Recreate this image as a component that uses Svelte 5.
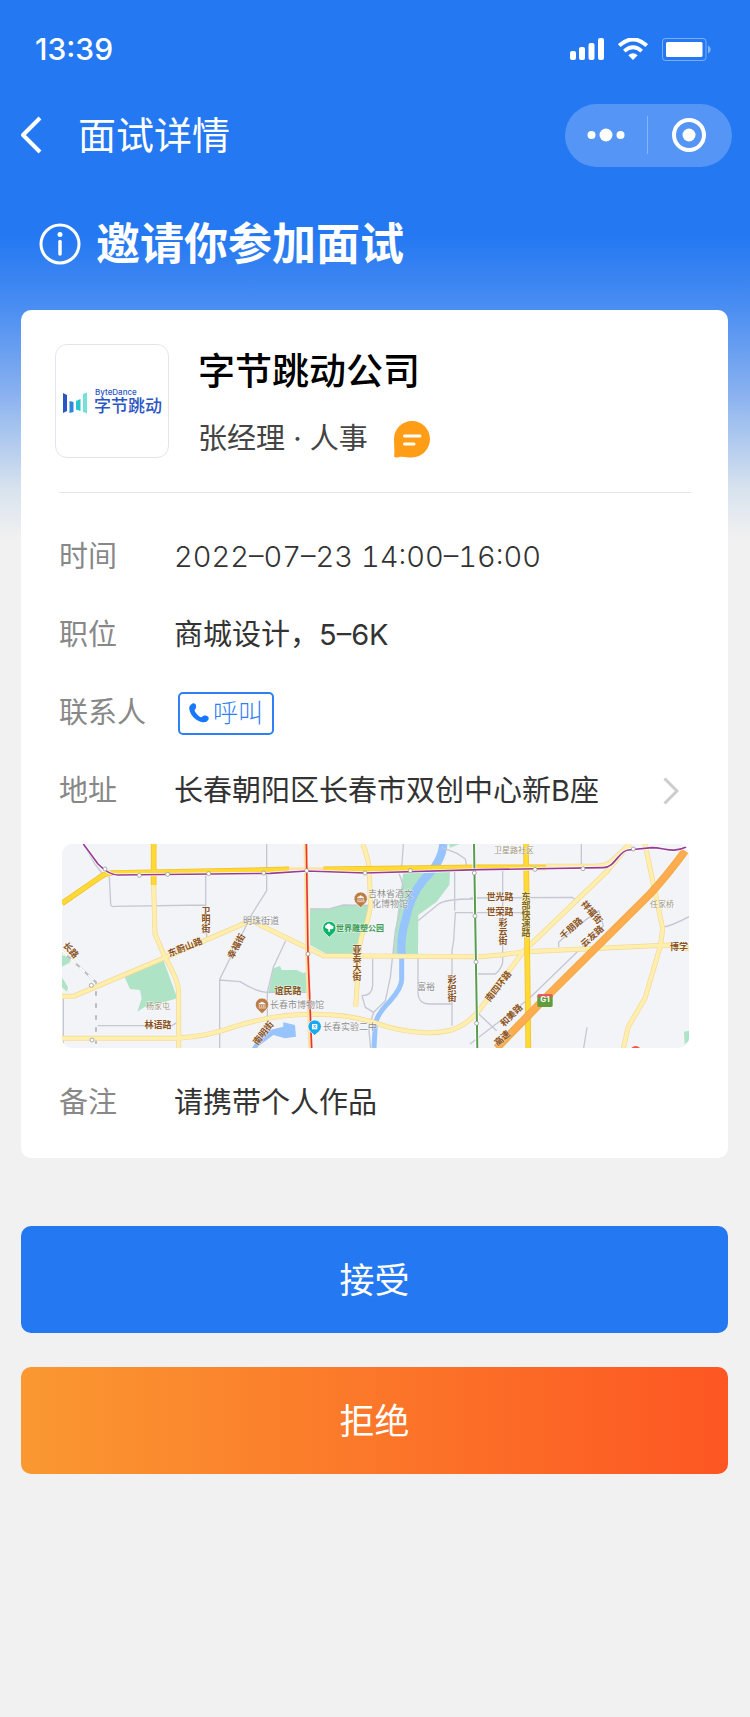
<script>
  const interview = {
    company: "字节跳动公司",
    contact: "张经理 · 人事",
    time: "2022–07–23 14:00–16:00",
    job: "商城设计，5–6K",
    address: "长春朝阳区长春市双创中心新B座",
    remark: "请携带个人作品",
  };

  let answer = $state("");

  // street names: x, y is the middle of the label
  const streets = [
    { text: "东蔚山路", x: 123, y: 103, angle: -22 },
    { text: "林语路", x: 96, y: 180, angle: 0 },
    { text: "谊民路", x: 226, y: 146, angle: 0 },
    { text: "世光路", x: 438, y: 52, angle: 0 },
    { text: "世荣路", x: 438, y: 67, angle: 0 },
    { text: "祥福街", x: 530, y: 68, angle: 50 },
    { text: "千朋路", x: 509, y: 84, angle: -42 },
    { text: "云友路", x: 530, y: 92, angle: -42 },
    { text: "南四环路", x: 436, y: 142, angle: -52 },
    { text: "和美路", x: 449, y: 171, angle: -45 },
    { text: "博学", x: 617, y: 102, angle: 0 },
    { text: "长路", x: 9, y: 106, angle: 48 },
    { text: "高速", x: 440, y: 194, angle: -42 },
    { text: "南明街", x: 201, y: 189, angle: -52 },
    { text: "幸福街", x: 174, y: 102, angle: -62 },
  ];

  const columns = [
    { text: "卫明街", x: 144, y: 67 },
    { text: "亚泰大街", x: 295, y: 106 },
    { text: "彩织街", x: 390, y: 136 },
    { text: "彩云街", x: 441, y: 79 },
    { text: "东部快速路", x: 464, y: 53, dark: true },
  ];

  const places = [
    { text: "明珠街道", x: 181, y: 76 },
    { text: "吉林省酒文", x: 306, y: 49 },
    { text: "化博物馆", x: 310, y: 59 },
    { text: "长春市博物馆", x: 208, y: 160 },
    { text: "长春实验二中", x: 261, y: 182 },
    { text: "富裕", x: 355, y: 142 },
  ];

  const villages = [
    { text: "杨家屯", x: 84, y: 162 },
    { text: "任家桥", x: 588, y: 60 },
    { text: "卫星路社区", x: 432, y: 6 },
  ];

  const stations = [
    [129, 75], [232, 94], [317, 91], [440, 89], [605, 87], [734, 80], [909, 87],
    [1045, 80], [1419, 76], [1563, 74], [1714, 15], [88, 424], [90, 588],
    [738, 330], [1237, 87], [1239, 216], [1242, 354], [1244, 538],
  ];
</script>

<div class="page">
  <div class="status-bar">
    <span class="clock">13:39</span>
    <div class="status-icons">
      <svg width="34" height="22" viewBox="0 0 34 22" fill="#fff">
        <rect x="0" y="13" width="6" height="9" rx="2" />
        <rect x="9" y="9" width="6" height="13" rx="2" />
        <rect x="18.500" y="5" width="6" height="17" rx="2" />
        <rect x="28" y="0" width="6" height="22" rx="2" />
      </svg>
      <svg width="30" height="22" viewBox="0 0 30 22" fill="none" stroke="#fff">
        <path d="M1.200 7.600Q15-4.800 28.800 7.600" stroke-width="4" />
        <path d="M6.300 13.200Q15 5.500 23.700 13.200" stroke-width="3.800" />
        <path d="M10.300 17.200Q15 13.500 19.700 17.200L15 22Z" fill="#fff" stroke="none" />
      </svg>
      <svg width="49" height="23" viewBox="0 0 49 23">
        <rect x="0.500" y="0.500" width="43.500" height="22" rx="3" fill="none" stroke="#fff" stroke-opacity=".4" />
        <rect x="4" y="4" width="36.500" height="15" rx="1.500" fill="#fff" />
        <path d="M46 7.500C49.500 9 49.500 14 46 15.500Z" fill="#fff" fill-opacity=".45" />
      </svg>
    </div>
  </div>

  <header class="nav">
    <button class="back" aria-label="返回">
      <svg width="22" height="38" viewBox="0 0 22 38" fill="none" stroke="#fff" stroke-width="4">
        <path d="M20 2L3 19L20 36" stroke-linejoin="round" />
      </svg>
    </button>
    <h1>面试详情</h1>
    <div class="capsule">
      <button aria-label="更多">
        <svg width="38" height="14" viewBox="0 0 38 14" fill="#fff">
          <circle cx="4.500" cy="7" r="4" />
          <circle cx="19" cy="7" r="6.500" />
          <circle cx="33.500" cy="7" r="4" />
        </svg>
      </button>
      <span class="capsule-line"></span>
      <button aria-label="关闭">
        <svg width="36" height="36" viewBox="0 0 36 36">
          <circle cx="18" cy="18" r="15" fill="none" stroke="#fff" stroke-width="4" />
          <circle cx="18" cy="18" r="6.500" fill="#fff" />
        </svg>
      </button>
    </div>
  </header>

  <div class="invite">
    <svg width="42" height="42" viewBox="0 0 42 42" fill="none" stroke="#fff" stroke-width="3">
      <circle cx="21" cy="21" r="19" />
      <path d="M21 18.500V31" stroke-width="3.500" stroke-linecap="round" />
      <circle cx="21" cy="11.500" r="2.500" fill="#fff" stroke="none" />
    </svg>
    <h2>邀请你参加面试</h2>
  </div>

  <main>
    <section class="card">
      <div class="company">
        <svg class="logo" viewBox="0 0 112 112">
          <path d="M7 48L11 50V66L7 68Z" fill="#2b55c4" />
          <path d="M13.500 56L17.500 57V67L13.500 68Z" fill="#2d86dc" />
          <path d="M20 56L24.500 54V66L20 64.500Z" fill="#26c6cd" />
          <path d="M27 49L31 47.500V68.500L27 67Z" fill="#74e0d6" />
          <text x="39" y="50" class="logo-en">ByteDance</text>
          <text x="38" y="67" class="logo-zh">字节跳动</text>
        </svg>
        <div class="company-text">
          <h3>{interview.company}</h3>
          <div class="contact">
            <span>{interview.contact}</span>
            <button class="chat" aria-label="聊天">
              <svg width="36" height="37" viewBox="0 0 36 37">
                <path d="M18 0C28 0 36 8 36 18C36 28 28 36.500 18 36.500C13 36.500 9 35 5 36C2 36.800 0 37 .2 34.500C.8 31 0 24 0 18C0 8 8 0 18 0Z" fill="#ff9e16" />
                <path d="M10.500 15H26M10.500 23H20" stroke="#fff" stroke-width="3" stroke-linecap="round" />
              </svg>
            </button>
          </div>
        </div>
      </div>

      <div class="details">
        <div class="row">
          <span class="label">时间</span>
          <span class="value time">{interview.time}</span>
        </div>
        <div class="row">
          <span class="label">职位</span>
          <span class="value">{interview.job}</span>
        </div>
        <div class="row">
          <span class="label">联系人</span>
          <button class="call">
            <svg width="20" height="20" viewBox="0 0 20 20" fill="#1677ff">
              <path d="M3.500.6C5.200-.3 6.800.8 7 2.500C7.200 4 7.200 5.300 6.200 6.200C5.300 7 5.500 7.600 6.100 8.700C7.400 11 9.200 12.700 11.300 13.900C12.200 14.400 12.800 14.200 13.500 13.400C14.500 12.200 16 12.300 17.500 12.800C19.500 13.500 20.300 15 19.300 16.700C18 19 15.500 19.700 12.500 18.900C6.500 17.300 1.700 12.500.4 6.700C-.2 4 .9 1.900 3.500.6Z" />
            </svg>
            呼叫
          </button>
        </div>
        <a class="row" href="#map">
          <span class="label">地址</span>
          <span class="value">{interview.address}</span>
          <svg class="arrow" width="16" height="28" viewBox="0 0 16 28" fill="none" stroke="#ccc" stroke-width="3">
            <path d="M1.500 1.500L14 14L1.500 26.500" />
          </svg>
        </a>
      </div>

      <svg id="map" class="map" viewBox="0 0 627 204">
        <rect width="627" height="204" fill="#f2f4f8" />
        <!-- roads are drawn on a grid three times finer than the labels -->
        <g transform="scale(.333333)" fill="none" stroke-linejoin="round">
          <g fill="#aee4c5">
            <path d="M744 195H804L844 183L924 185L916 223L894 273L884 330H794L744 303Z" />
            <path d="M1024 85L1164 83L1162 123L1124 173L1069 213L1068 330H994L1006 213Z" />
            <path d="M619 448L634 373L654 366L659 378H704L724 388L734 383L736 443Z" />
            <path d="M186 395L304 348L346 463L294 478L249 488L226 503L239 463L234 438L204 435Z" />
            <path d="M0 334L29 341L22 357L0 368ZM0 400L18 430L15 443L0 430Z" />
            <path d="M1160 0H1192L1165 11ZM1866 563L1881 560V590L1868 601Z" />
          </g>
          <path d="M570 612L594 573L614 560L664 548V535L699 543L702 578L669 583L634 573L594 603L585 612Z" fill="#98c4fd" />
          <g stroke="#98c4fd">
            <path d="M1144 0Q1140 55 1084 108Q1045 155 1030 230Q1015 280 1019 330" stroke-width="25" />
            <path d="M1019 310V405Q1020 430 985 470Q945 510 940 540L936 612" stroke-width="15" />
          </g>

          <g stroke="#c5c8d3" stroke-width="4">
            <path d="M64 0L100 62L122 90M142 98L146 180Q147 190 158 187L430 183M431 93V182L434 280M614 0V140L570 210L473 406V612M473 408L534 413Q590 448 624 445" />
            <path d="M4 463V612M107 545H330L345 535M744 195L804 194L844 183L924 184M671 290L634 370L616 445H738M616 445V560" />
            <path d="M1024 0L1020 60L1010 85L1024 125L1018 183L1000 260L985 400L970 470L935 505L920 550L926 612M932 345V425Q930 455 900 455L910 490L935 505" />
            <path d="M1139 10L1185 28L1210 45L1214 66M1234 206H1180L1175 290L1170 320V545M1068 230L1130 180Q1150 165 1234 165M1068 335V450Q1070 478 1100 480H1170M1178 83V200" />
            <path d="M1322 80V355Q1318 375 1300 390H1240M1224 162L1530 160L1550 175M1224 206H1385M1558 0V70M1490 310V295L1540 250L1610 200L1624 245L1560 310L1400 465L1224 600M1245 505L1304 560M1575 550L1565 612M1802 250Q1830 245 1881 218" />
          </g>
          <path d="M0 320L102 415V612" stroke="#bbb" stroke-width="6" />
          <path d="M0 320L102 415V612" stroke="#fff" stroke-width="5" stroke-dasharray="22 14" />

          <g stroke="#f7d796" stroke-width="15">
            <path d="M0 457H34L309 341L560 233Q580 230 594 243L784 335L1254 338L1314 333L1390 323L1824 303L1881 315" />
            <path d="M0 583H344Q440 577 520 547Q640 511 740 511Q870 508 974 548Q1090 578 1170 558Q1220 540 1254 495L1324 403L1384 323L1634 83L1704 0" />
            <path d="M275 123L279 270L309 340Q350 410 350 445V612" />
            <path d="M902 0Q925 60 922 93L926 183Q920 230 900 273Q888 310 886 413L881 488" />
            <path d="M1749 0L1802 253L1796 303L1749 463L1699 548L1684 612M1452 67H1600Q1640 67 1655 45L1704 0" />
          </g>
          <g stroke="#ffefad" stroke-width="11">
            <path d="M0 457H34L309 341L560 233Q580 230 594 243L784 335L1254 338L1314 333L1390 323L1824 303L1881 315" />
            <path d="M0 583H344Q440 577 520 547Q640 511 740 511Q870 508 974 548Q1090 578 1170 558Q1220 540 1254 495L1324 403L1384 323L1634 83L1704 0" />
            <path d="M275 123L279 270L309 340Q350 410 350 445V612" />
            <path d="M902 0Q925 60 922 93L926 183Q920 230 900 273Q888 310 886 413L881 488" />
            <path d="M1749 0L1802 253L1796 303L1749 463L1699 548L1684 612M1452 67H1600Q1640 67 1655 45L1704 0" />
          </g>
          <g stroke="#f0bd2d" stroke-width="17">
            <path d="M0 178L115 99Q130 87 155 87L574 79L681 76M784 76L1254 70H1452" />
            <path d="M275 0V123M1392 0L1399 612" />
          </g>
          <path d="M681 76H784" stroke="#ffe3a4" stroke-width="13" />
          <g stroke="#ffda35" stroke-width="13">
            <path d="M0 178L115 99Q130 87 155 87L574 79L681 76M784 76L1254 70H1452" />
            <path d="M275 0V123M1392 0L1399 612" />
          </g>
          <path d="M1869 21Q1815 95 1764 150L1444 468L1304 612" stroke="#ecae45" stroke-width="24" />
          <path d="M1869 21Q1815 95 1764 150L1444 468L1304 612" stroke="#ffab50" stroke-width="18" />

          <path d="M731 0L736 333L745 612" stroke="#ffe3a4" stroke-width="13" />
          <path d="M733 0L738 333L749 612" stroke="#e6343a" stroke-width="5" />
          <path d="M1236 0L1246 612" stroke="#fff" stroke-width="11" />
          <path d="M1236 0L1246 612" stroke="#5a9c4d" stroke-width="6" />
          <path d="M64 0L108 60Q140 93 169 93L624 88L734 81L909 87L1254 77L1624 71C1660 70 1670 20 1699 18L1769 11C1810 11 1830 30 1874 8" stroke="#fff" stroke-width="9" />
          <path d="M64 0L108 60Q140 93 169 93L624 88L734 81L909 87L1254 77L1624 71C1660 70 1670 20 1699 18L1769 11C1810 11 1830 30 1874 8" stroke="#983c96" stroke-width="5" />
          {#each stations as [x, y]}
            <circle cx={x} cy={y} r="6" fill="#fff" stroke="#888" stroke-width="2" />
          {/each}

          <g fill="#bb7d48" stroke="#fff" stroke-width="2">
            <path d="M896 191L884 180A20 20 0 1 1 908 180Z" />
            <path d="M600 509L588 498A20 20 0 1 1 612 498Z" />
          </g>
          <path d="M802 280L788 266A20 20 0 1 1 816 266Z" fill="#08b36a" stroke="#fff" stroke-width="2" />
          <path d="M758 574L744 562A20 20 0 1 1 772 562Z" fill="#18a8ee" stroke="#fff" stroke-width="2" />
          <path d="M886 161L896 155L906 161ZM888 164V171M894 164V171M900 164V171M905 164V171M886 173H908" fill="#fff" stroke="#fff" stroke-width="2" />
          <path d="M590 480L600 474L610 480ZM592 483V490M598 483V490M604 483V490M609 483V490M590 492H612" fill="#fff" stroke="#fff" stroke-width="2" />
          <path d="M792 253A6 6 0 0 1 794 242A7 7 0 0 1 807 244A6 6 0 0 1 810 256H804V263H799V256Z" fill="#fff" />
          <path d="M750 540H766V556H750Z" fill="#fff" />
          <path d="M754 545H762M758 545V549M754 552L758 549L762 552" stroke="#18a8ee" stroke-width="2" />
          <rect x="1426" y="451" width="46" height="38" rx="5" fill="#639c3a" />
          <path d="M1426 459V456Q1426 451 1431 451H1467Q1472 451 1472 456V459Z" fill="#ef5362" />
          <circle cx="1721" cy="623" r="17" fill="#f4573a" />
        </g>

        {#each streets as s}
          <text class="street" text-anchor="middle" dominant-baseline="central" transform="translate({s.x} {s.y}) rotate({s.angle})">{s.text}</text>
        {/each}
        {#each columns as c}
          <text class="street" class:dark={c.dark} text-anchor="middle">
            {#each c.text as char, i}
              <tspan x={c.x} y={c.y + 3 + i * 9}>{char}</tspan>
            {/each}
          </text>
        {/each}
        {#each places as p}
          <text class="place" x={p.x} y={p.y} dominant-baseline="central">{p.text}</text>
        {/each}
        {#each villages as v}
          <text class="village" x={v.x} y={v.y} dominant-baseline="central">{v.text}</text>
        {/each}
        <text class="park" x="274" y="84" dominant-baseline="central">世界雕塑公园</text>
        <text class="badge" x="483" y="158" text-anchor="middle">G1</text>
      </svg>

      <div class="row">
        <span class="label">备注</span>
        <span class="value">{interview.remark}</span>
      </div>
    </section>

    <div class="actions">
      <button class="accept" onclick={() => (answer = "accept")}>接受</button>
      <button class="refuse" onclick={() => (answer = "refuse")}>拒绝</button>
    </div>
  </main>
</div>

<style>
  :global(body) {
    margin: 0;
    background: #f1f1f1;
  }

  .page {
    box-sizing: border-box;
    min-height: 100vh;
    background: linear-gradient(#2478f2 235px, #458bf2 300px, #84aef0 387px, #d8e3ee 490px, #f1f1f1 540px);
    font-family: Inter, "Noto Sans CJK SC", sans-serif;
    color: #333;
  }

  button {
    padding: 0;
    border: none;
    background: none;
    color: inherit;
    font-family: inherit;
    cursor: pointer;
  }

  svg {
    display: block;
    flex: none;
  }

  h1,
  h2,
  h3 {
    margin: 0;
  }

  .status-bar {
    display: flex;
    align-items: center;
    justify-content: space-between;
    height: 98px;
    padding: 0 39px 0 35px;
    color: #fff;
  }

  .clock {
    font-size: 30px;
    font-weight: 500;
    line-height: 36px;
  }

  .status-icons {
    display: flex;
    align-items: center;
    gap: 14px;
  }

  .nav {
    display: flex;
    align-items: center;
    height: 74px;
    padding: 0 18px 0 20px;
    color: #fff;
  }

  .nav h1 {
    flex: 1;
    margin-left: 36px;
    font-size: 38px;
    font-weight: 400;
    line-height: 52px;
  }

  .capsule {
    display: flex;
    align-items: center;
    box-sizing: border-box;
    width: 167px;
    height: 63px;
    padding-right: 2px;
    border-radius: 32px;
    background: rgba(255, 255, 255, 0.22);
  }

  .capsule button {
    flex: 1;
    display: flex;
    justify-content: center;
  }

  .capsule-line {
    width: 1px;
    height: 38px;
    background: rgba(255, 255, 255, 0.3);
  }

  .invite {
    display: flex;
    align-items: center;
    gap: 15px;
    height: 138px;
    padding: 6px 39px 0;
    box-sizing: border-box;
    color: #fff;
  }

  .invite h2 {
    font-size: 44px;
    font-weight: 700;
    line-height: 52px;
  }

  main {
    padding: 0 22px 40px 21px;
  }

  .card {
    padding: 34px 0 16px;
    border-radius: 10px;
    background: #fff;
  }

  .company {
    display: flex;
    gap: 29px;
    margin: 0 37px 0 34px;
  }

  .logo {
    width: 112px;
    height: 112px;
    border: 1px solid #e3e5ec;
    border-radius: 12px;
  }

  .logo-en {
    font-size: 8px;
    font-weight: 500;
    fill: #2b55c4;
  }

  .logo-zh {
    font-size: 17px;
    font-weight: 500;
    fill: #2b55c4;
  }

  .company-text {
    padding-top: 2px;
  }

  .company h3 {
    color: #000;
    font-size: 37px;
    font-weight: 500;
    line-height: 52px;
  }

  .contact {
    display: flex;
    align-items: center;
    gap: 26px;
    margin-top: 22px;
    color: #444;
    font-size: 29px;
    line-height: 38px;
  }

  .details {
    margin: 34px 37px 14px 38px;
    padding-top: 25px;
    border-top: 1px solid #e6e6e6;
  }

  .row {
    display: flex;
    align-items: center;
    min-height: 78px;
    color: #333;
    font-size: 29px;
    line-height: 40px;
    text-decoration: none;
  }

  .label {
    width: 115px;
    color: #888;
  }

  .value {
    flex: 1;
  }

  .time {
    font-weight: 300;
    font-variant-numeric: tabular-nums;
  }

  .call {
    display: flex;
    align-items: center;
    justify-content: center;
    gap: 4px;
    width: 96px;
    height: 43px;
    margin-left: 4px;
    border: 2px solid #2f7ff5;
    border-radius: 5px;
    color: #2f7ff5;
    font-size: 25px;
    font-weight: 300;
    line-height: 36px;
  }

  .arrow {
    margin-right: 12px;
  }

  .map {
    width: calc(100% - 80px);
    height: auto;
    margin: 0 39px 16px 41px;
    border-radius: 10px;
  }

  .map text {
    stroke: #fff;
    stroke-opacity: 0.6;
    stroke-width: 1px;
    paint-order: stroke;
  }

  .map .street {
    fill: #8a5220;
    font-size: 9px;
    font-weight: 700;
  }

  .map .dark {
    fill: #7d6a2b;
  }

  .map .place {
    fill: #8f8f8f;
    font-size: 9px;
  }

  .map .village {
    fill: #a0967e;
    font-size: 8px;
  }

  .map .park {
    fill: #3f9a57;
    font-size: 8px;
    font-weight: 700;
  }

  .map .badge {
    fill: #fff;
    font-size: 8px;
    font-weight: 700;
    stroke: none;
  }

  .card > .row {
    margin: 0 38px;
  }

  .actions {
    display: grid;
    gap: 34px;
    margin-top: 68px;
  }

  .accept,
  .refuse {
    height: 107px;
    border-radius: 10px;
    color: #fff;
    font-size: 35px;
    font-weight: 400;
    line-height: 48px;
  }

  .accept {
    background: #2478f2;
  }

  .refuse {
    background: linear-gradient(to right, #fa9831, #fd5622);
  }
</style>
